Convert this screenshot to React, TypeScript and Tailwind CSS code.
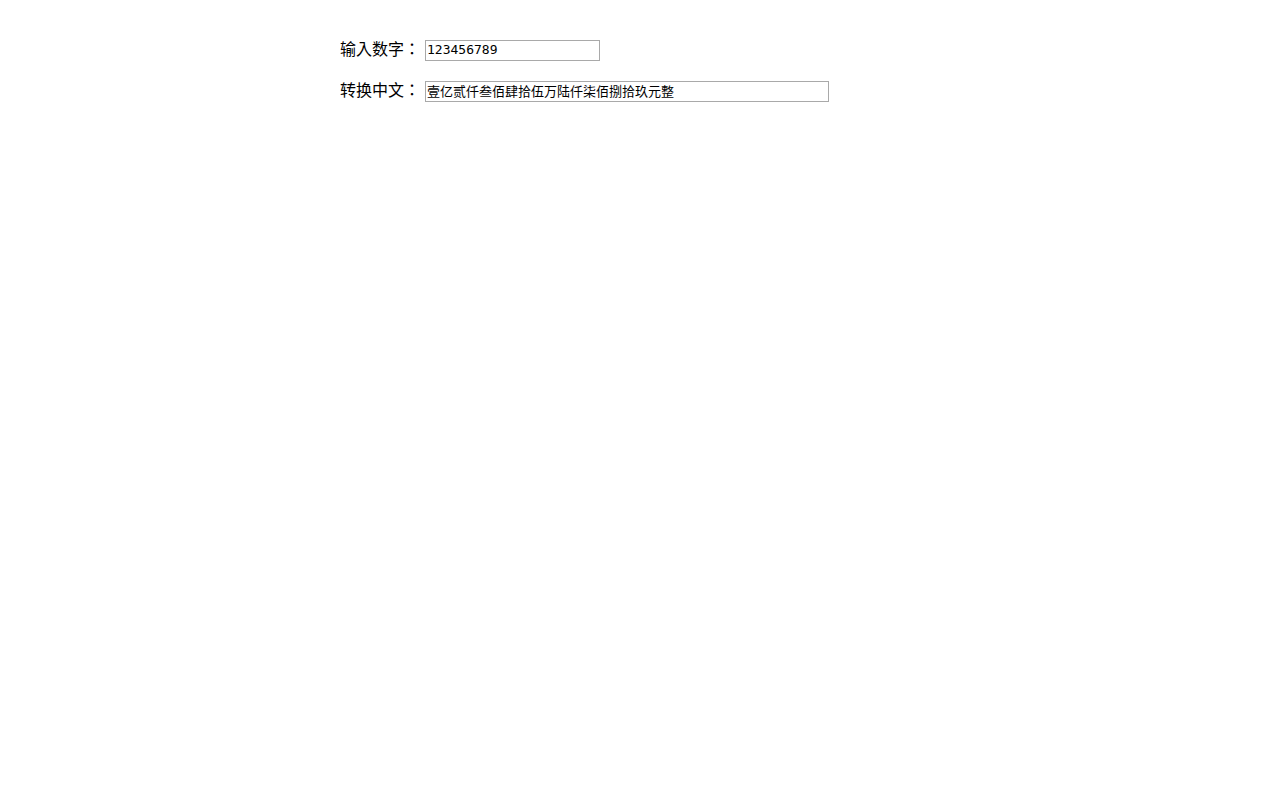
import { useState } from 'react';

const DIGITS = ['零', '壹', '贰', '叁', '肆', '伍', '陆', '柒', '捌', '玖'];
const UNITS = ['', '拾', '佰', '仟'];
const GROUPS = ['', '万', '亿', '万亿'];

function toChinese(value: string) {
  if (!/^\d{1,16}$/.test(value)) return '';
  const num = value.replace(/^0+/, '');
  if (!num) return '零元整';

  let result = '';
  let zero = false;
  let groupHasValue = false;
  for (let i = 0; i < num.length; i++) {
    const pos = num.length - 1 - i;
    const digit = Number(num[i]);
    if (digit === 0) {
      zero = true;
    } else {
      if (zero) result += DIGITS[0];
      zero = false;
      groupHasValue = true;
      result += DIGITS[digit] + UNITS[pos % 4];
    }
    if (pos % 4 === 0) {
      if (groupHasValue) result += GROUPS[pos / 4];
      groupHasValue = false;
    }
  }
  return result + '元整';
}

const inputClass =
  "h-[21px] min-w-0 border border-[#a9a9a9] bg-white px-px pb-0.5 text-[13px] leading-4 text-black outline-none font-['DejaVu_Sans_Mono','Noto_Sans_CJK_SC',monospace]";

export default function App() {
  const [amount, setAmount] = useState('123456789');

  return (
    <div className="mx-auto flex max-w-[600px] flex-col gap-5 pt-10 text-base leading-4 text-black font-['Noto_Sans_CJK_TC',sans-serif]">
      <div className="flex items-start gap-[5px]">
        <label htmlFor="amount" className="shrink-0">输入数字：</label>
        <input
          id="amount"
          type="text"
          className={`${inputClass} w-[175px]`}
          value={amount}
          onChange={(e) => setAmount(e.target.value)}
        />
      </div>
      <div className="flex items-start gap-[5px]">
        <label htmlFor="chinese" className="shrink-0">转换中文：</label>
        <input
          id="chinese"
          type="text"
          className={`${inputClass} w-[404px]`}
          value={toChinese(amount)}
          readOnly
        />
      </div>
    </div>
  );
}
